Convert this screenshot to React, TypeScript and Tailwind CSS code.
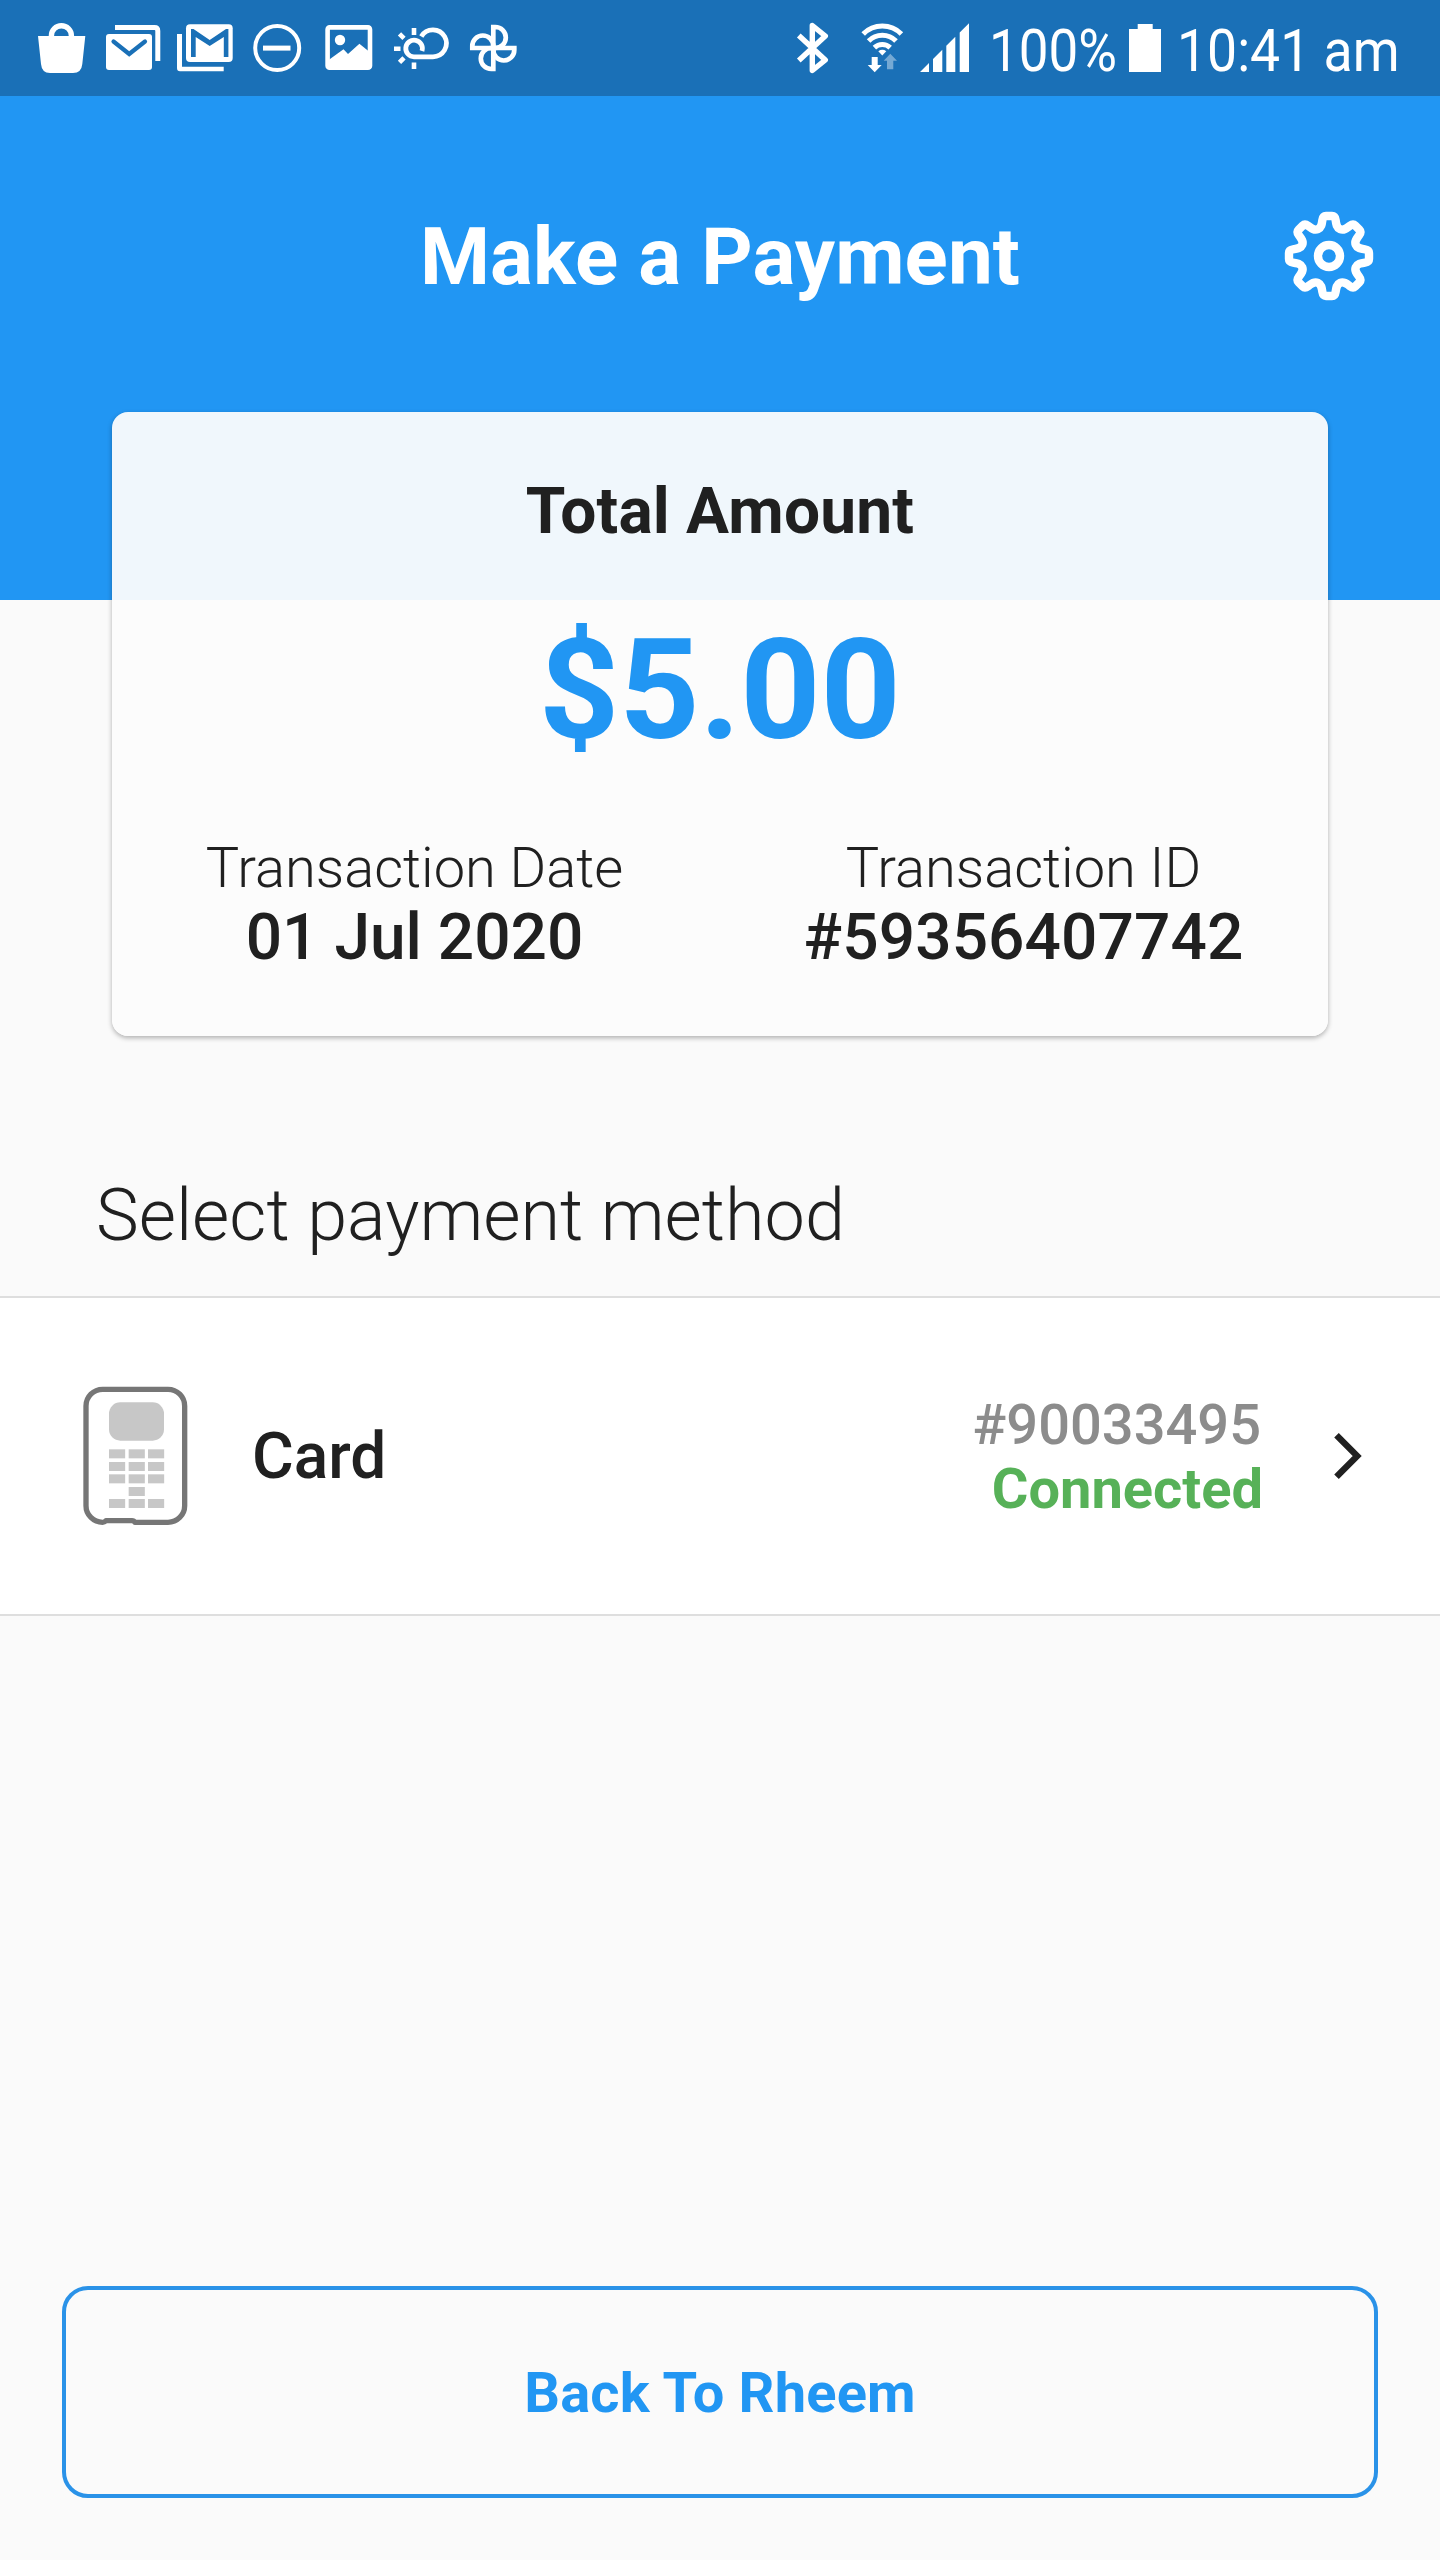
import type { ReactNode } from 'react';

const BAR = '#1a70b7';

/** Status bar glyph: shares the bar's coordinate space, cropped to its own slot. */
function Slot({ x, w, className, children }: { x: number; w: number; className: string; children: ReactNode }) {
  return (
    <svg className={`h-24 shrink-0 ${className}`} viewBox={`${x} 0 ${w} 96`} fill="#fff" aria-hidden="true">
      {children}
    </svg>
  );
}

function StatusBar() {
  return (
    <div className="flex h-24 shrink-0 items-start justify-between bg-[#1a70b7] pl-8 text-white">
      <div className="flex">
        <Slot x={32} w={72} className="w-[72px]">
          <path d="M38 36H85.3L82.3 64Q81.5 73 73 73H50Q41.8 73 41 64Z" />
          <path d="M51.4 38V35.7A10 10 0 0 1 71.4 35.7V38" fill="none" stroke="#fff" strokeWidth="5.4" />
        </Slot>
        <Slot x={104} w={72} className="w-[72px]">
          <rect x="106" y="34" width="46" height="36" rx="3" />
          <path d="M113.5 41.5L129.2 54L145 41.5" fill="none" stroke={BAR} strokeWidth="4.2" strokeLinecap="round" />
          <path d="M115 27.6H154.5Q157.8 27.6 157.8 31V61" fill="none" stroke="#fff" strokeWidth="5" />
        </Slot>
        <Slot x={176} w={72} className="w-[72px]">
          <path d="M177 34H182V66.7H223.7V71.2H180Q177 71.2 177 68Z" />
          <rect x="186" y="24.3" width="46.7" height="37.7" rx="4" />
          <path
            d="M191 57V29H193.5L209.7 40L226 29H228.4V57H223.8V37L209.7 46L195.7 37V57Z"
            fill={BAR}
          />
        </Slot>
        <Slot x={248} w={72} className="w-[72px]">
          <circle cx="277.2" cy="48" r="22" fill="none" stroke="#fff" strokeWidth="4" />
          <rect x="263" y="45.6" width="27.5" height="5" />
        </Slot>
        <Slot x={320} w={68} className="w-[68px]">
          <rect x="327.6" y="27.4" width="42.4" height="40.4" rx="2" fill="none" stroke="#fff" strokeWidth="4.6" />
          <circle cx="340" cy="40" r="5.2" />
          <path d="M328 61L330 59L343.5 49.3L348 54L359.4 43.7L369 51.5V69H328Z" />
        </Slot>
        <Slot x={388} w={76} className="w-[76px]">
          <path
            d="M421.3 36.4A13.5 13.5 0 1 1 432.8 56.8H414A8.3 8.3 0 1 1 422 51"
            fill="none"
            stroke="#fff"
            strokeWidth="4.8"
          />
          <path
            d="M414 28V35M414 62.5V69M394 48.7H400.5M399.5 33.8L404 38.3M399.5 62.4L404 57.9"
            stroke="#fff"
            strokeWidth="4.6"
          />
        </Slot>
        <Slot x={464} w={64} className="w-16">
          {[0, 90, 180, 270].map((a) => (
            <path
              key={a}
              d="M493.3 48V27h2a10.5 10.5 0 0 1 0 21z"
              transform={`rotate(${a} 493.3 48)`}
              fill="none"
              stroke="#fff"
              strokeWidth="4.7"
            />
          ))}
        </Slot>
      </div>
      <div className="flex">
        <Slot x={784} w={64} className="w-16">
          <path
            d="M798.8 35.6L825.3 60L812.3 70.5V25.5L825.3 36L798.8 60.4"
            fill="none"
            stroke="#fff"
            strokeWidth="5.4"
            strokeLinejoin="round"
          />
        </Slot>
        <Slot x={848} w={64} className="w-16">
          <g fill="none" stroke="#fff" strokeWidth="5">
            <path d="M863.2 34A27 27 0 0 1 901.4 34" />
            <path d="M868.6 41A19 19 0 0 1 896 41" />
            <path d="M874.4 47.6A11.5 11.5 0 0 1 890.2 47.6" />
          </g>
          <path d="M878.3 51.2Q882.3 48.4 886.3 51.2L882.3 55.6Z" />
          <path d="M871.7 57H877.7V65H881.7L874.7 72.3L867.7 65H871.7Z" />
          <path d="M887 69.3H893.3V60.7H897L890.3 53.7L883.7 60.7H887Z" opacity=".4" />
        </Slot>
        <Slot x={912} w={77} className="w-[77px]">
          <path d="M920 72L929 63V72ZM933 72V59L942.3 49.7V72ZM946.3 72V45.8L955.3 36.8V72ZM959.7 72V32.6L969 23.3V72Z" />
        </Slot>
        <div className="w-[132px] pt-[15px]">
          <div className="origin-left scale-x-[0.882] text-[60px] leading-[71px] whitespace-nowrap">100%</div>
        </div>
        <Slot x={1121} w={56} className="w-14">
          <path d="M1129 29H1137.7V24H1152.7V29H1161V72H1129Z" />
        </Slot>
        <div className="w-[263px] pt-[15px]">
          <div className="origin-left scale-x-[0.892] text-[60px] leading-[71px] whitespace-nowrap">10:41 am</div>
        </div>
      </div>
    </div>
  );
}

/** Closed outline of an eight-tooth cog around the origin. */
function cogPath() {
  const half: [number, number][] = [
    [3, -40],
    [6, -40],
    [6.6, -36],
    [7.2, -31.5],
    [7.7, -28.2],
    [11.1, -26.8],
  ];
  const at = ([x, y]: [number, number], deg: number) => {
    const t = (deg * Math.PI) / 180;
    return `${(x * Math.cos(t) - y * Math.sin(t)).toFixed(2)} ${(x * Math.sin(t) + y * Math.cos(t)).toFixed(2)}`;
  };
  let d = '';
  for (let k = 0; k < 8; k++) {
    const a = k * 45;
    const p = half.map((q) => at(q, a));
    const m = half.map(([x, y]) => at([-x, y], a + 45));
    d += `${k === 0 ? 'M' : 'L'}${p[0]}Q${p[1]} ${p[2]}C${p[3]} ${p[4]} ${p[5]}C${m[4]} ${m[3]} ${m[2]}Q${m[1]} ${m[0]}`;
  }
  return d + 'Z';
}

function Cog() {
  return (
    <svg className="size-[90px]" viewBox="-45 -45 90 90" fill="none" stroke="#fff" strokeWidth="8.4" strokeLinejoin="round">
      <path d={cogPath()} />
      <circle r="11" />
    </svg>
  );
}

function TerminalIcon() {
  const rows = [508, 546, 583, 621, 657];
  return (
    <svg className="h-[140px] w-[105px]" viewBox="69 318 315 420" fill="none">
      <path
        d="M225 727H324A50 50 0 0 0 374 677V378A50 50 0 0 0 324 328H128A50 50 0 0 0 78 378V677A50 50 0 0 0 128 727Q134 727 138 722H216Q222 722 225 727Z"
        stroke="#767676"
        strokeWidth="16"
        strokeLinejoin="round"
      />
      <rect x="147" y="367" width="165" height="115" rx="34" fill="#c7c7c7" />
      {rows.map((y, r) =>
        [147, 206, 264].map((x, c) =>
          r === 3 && c !== 1 ? null : <rect key={`${x}-${y}`} x={x} y={y} width="48.5" height="27" fill="#c7c7c7" />,
        ),
      )}
    </svg>
  );
}

export default function App() {
  return (
    <div className="flex h-[2560px] w-[1440px] flex-col overflow-hidden bg-[#fafafa] font-['Roboto',sans-serif] text-[#202020]">
      <StatusBar />

      <header className="h-[504px] shrink-0 bg-[#2196f3] pt-[114px] text-white">
        <div className="grid grid-cols-[1fr_auto_1fr] items-center px-[66px]">
          <span />
          <h1 className="text-[80px] leading-[94px] font-bold tracking-[0.1px]">Make a Payment</h1>
          <button className="mb-[3px] justify-self-end" aria-label="Settings">
            <Cog />
          </button>
        </div>
      </header>

      <section className="z-10 mx-28 -mt-[188px] flex h-[624px] shrink-0 flex-col items-center rounded-[16px] bg-[#fcfcfc]/95 pt-[62px] shadow-[0_2px_5px_rgba(0,0,0,0.3)]">
        <h2 className="text-[64px] leading-[75px] font-bold tracking-[0.2px]">Total Amount</h2>
        <div className="mt-[59px] text-[140px] leading-[164px] font-bold text-[#2196f3]">$5.00</div>
        <div className="mt-[63px] grid w-full grid-cols-2 text-center">
          <div className="pr-[3px]">
            <div className="text-[56px] leading-[66px] font-light">Transaction Date</div>
            <div className="text-[64px] leading-[73px] font-medium">01 Jul 2020</div>
          </div>
          <div className="pr-px">
            <div className="text-[56px] leading-[66px] font-light">Transaction ID</div>
            <div className="text-[64px] leading-[73px] font-medium tracking-[0.1px]">#59356407742</div>
          </div>
        </div>
      </section>

      <h3 className="mt-[137px] pl-24 text-[72px] leading-[85px] font-light">Select payment method</h3>

      <div className="mt-[38px] flex h-80 shrink-0 items-center border-y-2 border-[#dedede] bg-white pr-[76px] pl-[83px]">
        <TerminalIcon />
        <div className="ml-16 flex-1 pt-px text-[64px] leading-[75px] font-medium">Card</div>
        <div className="text-right text-[56px]">
          <div className="pr-[3px] leading-[66px] font-medium text-[#8c8c8c]">#90033495</div>
          <div className="pr-px leading-[62px] font-bold text-[#57b158]">Connected</div>
        </div>
        <svg className="ml-[70px] h-12 w-[30px]" viewBox="0 0 30 48" fill="none" stroke="#202020" strokeWidth="6.4">
          <path d="M2.5 3.2L23.2 24L2.5 44.8" />
        </svg>
      </div>

      <button className="mx-[62px] mt-auto mb-[62px] h-[212px] shrink-0 rounded-[26px] border-4 border-[#2a92e8] pt-px text-[56px] leading-[66px] font-bold tracking-[0.2px] text-[#2196f3]">
        Back To Rheem
      </button>
    </div>
  );
}
